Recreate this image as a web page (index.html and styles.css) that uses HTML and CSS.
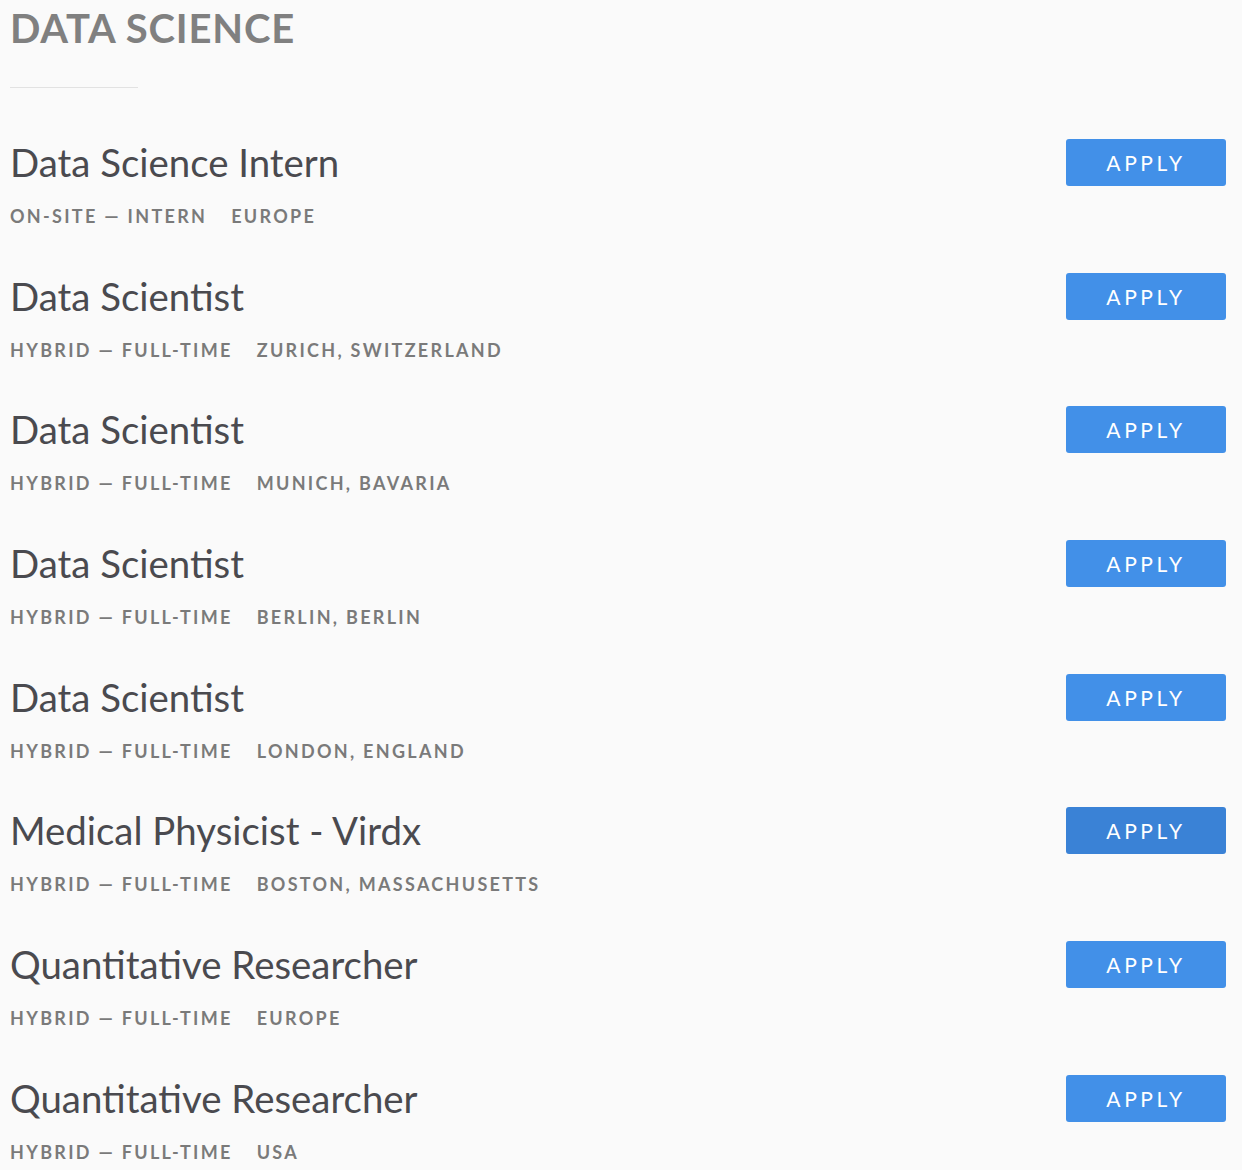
FILE: index.html
```html
<!DOCTYPE html>
<html>
<head>
<meta charset="utf-8">
<link rel="stylesheet" href="styles.css">
</head>
<body>
<div class="page">
  <h2 class="dept">DATA SCIENCE</h2>
  <div class="rule"></div>
  <ul class="jobs">
    <li class="job"><div class="info"><div class="title">Data Science Intern</div><div class="meta"><span>ON-SITE — INTERN</span><span>EUROPE</span></div></div><a class="apply">APPLY</a></li>
    <li class="job"><div class="info"><div class="title">Data Scientist</div><div class="meta"><span>HYBRID — FULL-TIME</span><span>ZURICH, SWITZERLAND</span></div></div><a class="apply">APPLY</a></li>
    <li class="job"><div class="info"><div class="title">Data Scientist</div><div class="meta"><span>HYBRID — FULL-TIME</span><span>MUNICH, BAVARIA</span></div></div><a class="apply">APPLY</a></li>
    <li class="job"><div class="info"><div class="title">Data Scientist</div><div class="meta"><span>HYBRID — FULL-TIME</span><span>BERLIN, BERLIN</span></div></div><a class="apply">APPLY</a></li>
    <li class="job"><div class="info"><div class="title">Data Scientist</div><div class="meta"><span>HYBRID — FULL-TIME</span><span>LONDON, ENGLAND</span></div></div><a class="apply">APPLY</a></li>
    <li class="job"><div class="info"><div class="title">Medical Physicist - Virdx</div><div class="meta"><span>HYBRID — FULL-TIME</span><span>BOSTON, MASSACHUSETTS</span></div></div><a class="apply hover">APPLY</a></li>
    <li class="job"><div class="info"><div class="title">Quantitative Researcher</div><div class="meta"><span>HYBRID — FULL-TIME</span><span>EUROPE</span></div></div><a class="apply">APPLY</a></li>
    <li class="job"><div class="info"><div class="title">Quantitative Researcher</div><div class="meta"><span>HYBRID — FULL-TIME</span><span>USA</span></div></div><a class="apply">APPLY</a></li>
  </ul>
</div>
</body>
</html>
```
FILE: styles.css
```css
html, body {
  margin: 0;
  padding: 0;
  background: #fafafa;
}
body {
  font-family: Lato, "Open Sans", sans-serif;
}
.page {
  padding: 0 16px 0 10px;
}
.dept {
  margin: 0;
  padding-top: 4px;
  font-size: 40px;
  line-height: 48px;
  font-weight: 700;
  color: #808080;
  letter-spacing: 0.8px;
}
.rule {
  width: 128px;
  height: 1px;
  background: #e2e2e2;
  margin-top: 35px;
}
.jobs {
  list-style: none;
  margin: 0;
  padding: 0;
  margin-top: 51px;
}
.job {
  display: flex;
  justify-content: space-between;
  align-items: flex-start;
  height: 133.7px;
}
.title {
  font-size: 38.4px;
  line-height: 50px;
  color: #4a4a4f;
  margin-top: -2px;
}
.meta {
  display: flex;
  gap: 24px;
  margin-top: 18px;
  font-size: 18px;
  font-weight: 700;
  letter-spacing: 2.3px;
  color: #7a7a7a;
}
.apply {
  display: flex;
  align-items: center;
  justify-content: center;
  width: 160px;
  height: 47px;
  box-sizing: border-box;
  background: #4290e8;
  color: #fff;
  border-radius: 3px;
  font-size: 21px;
  letter-spacing: 3.6px;
}
.apply.hover {
  background: #3a82d6;
}
```
